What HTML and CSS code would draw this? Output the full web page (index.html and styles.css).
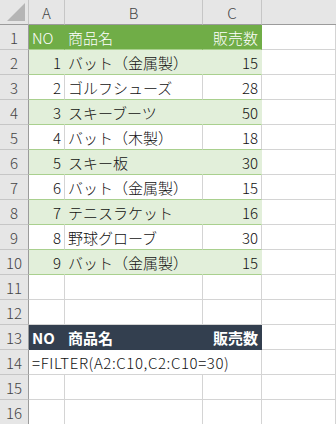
FILE: index.html
```html
<!DOCTYPE html>
<html lang="ja">
<head>
<meta charset="utf-8">
<link rel="stylesheet" href="styles.css">
</head>
<body>
<div class="sheet">
  <div class="hd corner"><span class="tri"></span></div>
  <div class="hd col">A</div>
  <div class="hd col">B</div>
  <div class="hd col">C</div>
  <div class="hd col last"></div>

  <div class="rn">1</div>
  <div class="c th">NO</div>
  <div class="c th">商品名</div>
  <div class="c th r">販売数</div>
  <div class="c"></div>

  <div class="rn">2</div>
  <div class="c band r">1</div>
  <div class="c band">バット（金属製）</div>
  <div class="c band r">15</div>
  <div class="c"></div>

  <div class="rn">3</div>
  <div class="c tw r">2</div>
  <div class="c tw">ゴルフシューズ</div>
  <div class="c tw r">28</div>
  <div class="c"></div>

  <div class="rn">4</div>
  <div class="c band r">3</div>
  <div class="c band">スキーブーツ</div>
  <div class="c band r">50</div>
  <div class="c"></div>

  <div class="rn">5</div>
  <div class="c tw r">4</div>
  <div class="c tw">バット（木製）</div>
  <div class="c tw r">18</div>
  <div class="c"></div>

  <div class="rn">6</div>
  <div class="c band r">5</div>
  <div class="c band">スキー板</div>
  <div class="c band r">30</div>
  <div class="c"></div>

  <div class="rn">7</div>
  <div class="c tw r">6</div>
  <div class="c tw">バット（金属製）</div>
  <div class="c tw r">15</div>
  <div class="c"></div>

  <div class="rn">8</div>
  <div class="c band r">7</div>
  <div class="c band">テニスラケット</div>
  <div class="c band r">16</div>
  <div class="c"></div>

  <div class="rn">9</div>
  <div class="c tw r">8</div>
  <div class="c tw">野球グローブ</div>
  <div class="c tw r">30</div>
  <div class="c"></div>

  <div class="rn">10</div>
  <div class="c band r">9</div>
  <div class="c band">バット（金属製）</div>
  <div class="c band r">15</div>
  <div class="c"></div>

  <div class="rn">11</div>
  <div class="c"></div><div class="c"></div><div class="c"></div><div class="c"></div>

  <div class="rn">12</div>
  <div class="c"></div><div class="c"></div><div class="c"></div><div class="c"></div>

  <div class="rn">13</div>
  <div class="c dk">NO</div>
  <div class="c dk">商品名</div>
  <div class="c dk r">販売数</div>
  <div class="c"></div>

  <div class="rn">14</div>
  <div class="c span3">=FILTER(A2:C10,C2:C10=30)</div>
  <div class="c"></div>

  <div class="rn">15</div>
  <div class="c"></div><div class="c"></div><div class="c"></div><div class="c"></div>

  <div class="rn">16</div>
  <div class="c"></div><div class="c"></div><div class="c"></div><div class="c"></div>
</div>
</body>
</html>
```

FILE: styles.css
```css
html, body {
  margin: 0;
  padding: 0;
  background: #ffffff;
}
body {
  width: 336px;
  height: 424px;
  overflow: hidden;
  font-family: "Noto Sans CJK JP", "Noto Sans", sans-serif;
  font-size: 15px;
  font-weight: 300;
  color: #111;
}
.sheet {
  display: grid;
  grid-template-columns: 29px 36px 138px 59px 74px;
  grid-auto-rows: 25px;
  width: 336px;
}
.sheet > div {
  box-sizing: border-box;
  border-right: 1px solid #d4d4d4;
  border-bottom: 1px solid #d4d4d4;
  display: flex;
  align-items: center;
  white-space: nowrap;
  overflow: hidden;
  line-height: 1;
  padding-top: 1px;
}
.hd {
  background: #e6e6e6;
  color: #444;
  justify-content: center;
  border-right-color: #c6c6c6 !important;
  border-bottom-color: #9b9b9b !important;
}
.corner {
  position: relative;
}
.tri {
  position: absolute;
  right: 3px;
  bottom: 3px;
  width: 0;
  height: 0;
  border-left: 18px solid transparent;
  border-bottom: 18px solid #b5b5b5;
}
.last { border-right: none !important; }
.rn {
  background: #e6e6e6;
  color: #444;
  justify-content: center;
  border-right-color: #9b9b9b !important;
  border-bottom-color: #c6c6c6 !important;
}
.c { padding-left: 3px; padding-right: 3px; }
.r { justify-content: flex-end; }
.th {
  background: #70ad47;
  color: #ffffff;
  border-right-color: #70ad47 !important;
  border-bottom-color: #a9d08e !important;
}
.band {
  background: #e2efda;
  border-right-color: #e2efda !important;
  border-bottom-color: #a9d08e !important;
}
.tw {
  border-bottom-color: #a9d08e !important;
}
.dk {
  background: #333f4f;
  color: #ffffff;
  font-weight: bold;
  border-right-color: #333f4f !important;
  border-bottom-color: #333f4f !important;
}
.span3 {
  grid-column: span 3;
  letter-spacing: 0.6px;
}
```
